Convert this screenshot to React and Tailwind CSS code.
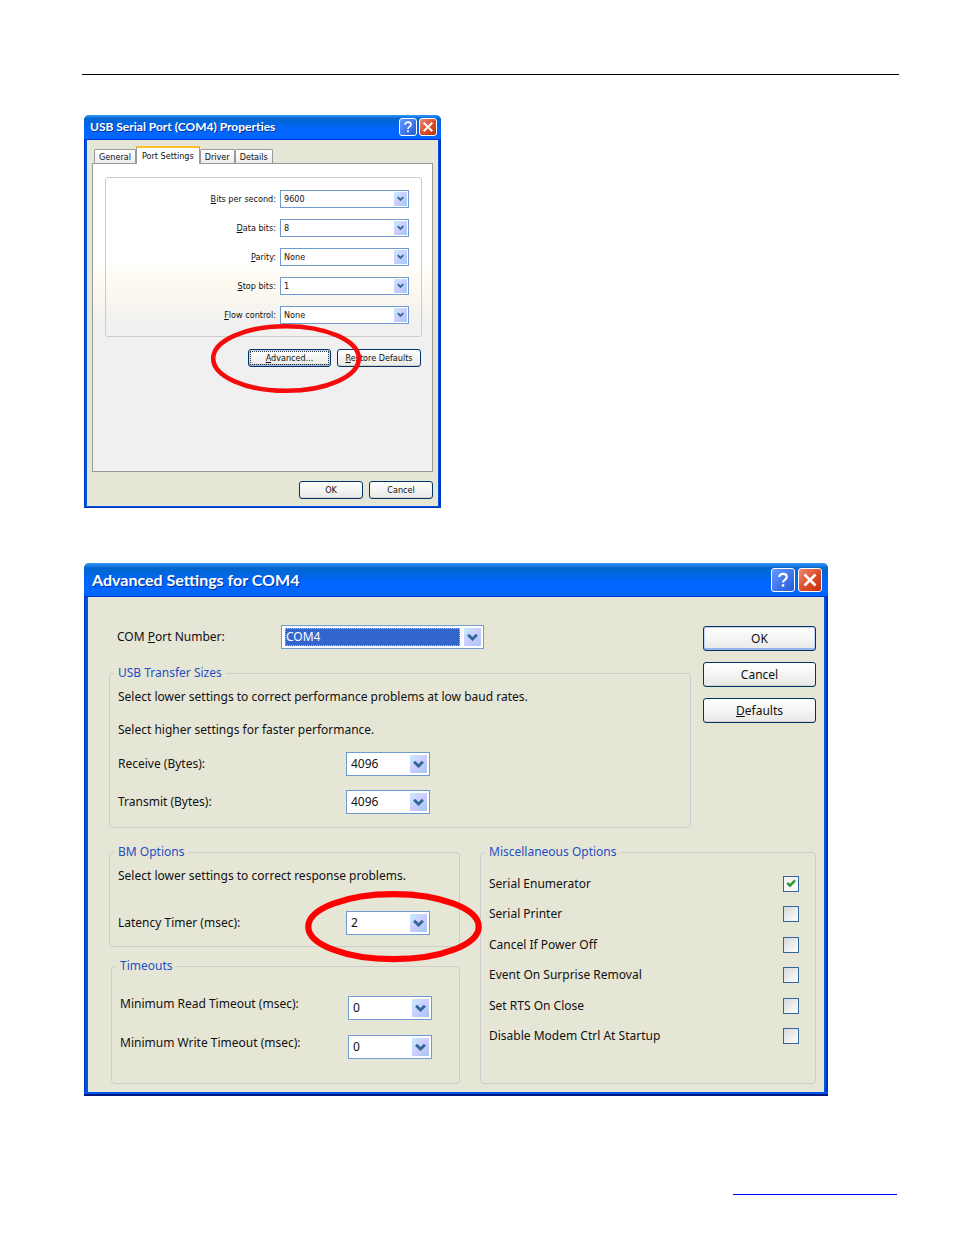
import React, { useId } from "react";

function Chevron({ small }) {
  return (
    <span
      className={
        "pointer-events-none absolute flex items-center justify-center bg-linear-to-br from-[#c4ecff] via-[#ccccff] to-[#a0c8f0] " +
        (small ? "inset-y-px right-px w-[13px]" : "inset-y-[2px] right-[2px] w-[17px]")
      }
    >
      <svg viewBox="0 0 10 8" className={small ? "w-[7px]" : "w-[11px]"} aria-hidden="true">
        <path d="M1 1.5 L5 5.5 L9 1.5" fill="none" stroke="#336699" strokeWidth="2.6" />
      </svg>
    </span>
  );
}

function Combo({ id, value, small, selected, className }) {
  const height = small ? "h-[18px]" : "h-6";
  return (
    <div className={"relative flex shrink-0 border border-[#6f9bd0] bg-white " + height + " " + className}>
      <select
        id={id}
        defaultValue={value}
        className={
          "min-w-0 flex-1 appearance-none outline-none " +
          (small ? "pl-[3px] " : "") +
          (selected
            ? "my-[2px] mr-[23px] ml-[3px] border border-dotted border-[#f0b060] bg-[#3366cc] text-white"
            : small ? "" : "pl-1")
        }
      >
        <option>{value}</option>
      </select>
      <Chevron small={small} />
    </div>
  );
}

function XpButton({ children, primary, focused, className }) {
  return (
    <button
      type="button"
      className={
        "flex items-center justify-center rounded-[3px] border border-[#003366] bg-linear-to-b from-white via-[#f4f4f2] to-[#e8e8e8] p-px " +
        (primary ? "shadow-[inset_0_-2px_0_#99b3e8,inset_0_0_0_1px_#c4d4f6] " : "shadow-[inset_0_-1px_0_#d6d2cc] ") +
        className
      }
    >
      <span className={"flex h-full w-full items-center justify-center " + (focused ? "border border-dotted border-[#333]" : "")}>
        <span>{children}</span>
      </span>
    </button>
  );
}

function TitleBar({ title, large }) {
  const box = large ? "size-6 rounded-[3px]" : "size-[18px] rounded-[3px]";
  const icon = large ? "size-[18px]" : "size-[14px]";
  return (
    <header
      className={
        "flex items-center justify-between rounded-t-[5px] border-b border-[#0033cc] bg-linear-to-b from-[#3399ff] via-[#0066cc] via-15% to-[#0066ff] to-60% text-white " +
        (large ? "h-[34px] pr-[6px] pl-2" : "h-[25px] pr-1 pl-[6px]")
      }
    >
      <h2
        className={
          "font-['Lato',sans-serif] font-bold [text-shadow:1px_1px_0_#003399] " +
          (large ? "text-[16px]" : "text-[12px]")
        }
      >
        {title}
      </h2>
      <div className={large ? "flex gap-[3px]" : "flex gap-[2px]"}>
        <button
          type="button"
          aria-label="Help"
          className={"flex items-center justify-center border border-white bg-linear-to-br from-[#6699ff] to-[#2358d8] " + box}
        >
          <svg viewBox="0 0 18 18" className={icon} aria-hidden="true">
            <path d="M5.2 6 C5.2 1.8 12.8 1.8 12.8 6 C12.8 8.6 9 8.6 9 11.6" fill="none" stroke="#fff" strokeWidth="2.2" />
            <rect x="7.8" y="13.2" width="2.4" height="2.4" fill="#fff" />
          </svg>
        </button>
        <button
          type="button"
          aria-label="Close"
          className={"flex items-center justify-center border border-white bg-linear-to-br from-[#e98a70] via-[#dd4f2c] to-[#c03000] " + box}
        >
          <svg viewBox="0 0 18 18" className={icon} aria-hidden="true">
            <path d="M3.5 3.5 L14.5 14.5 M14.5 3.5 L3.5 14.5" fill="none" stroke="#fff" strokeWidth="2.6" />
          </svg>
        </button>
      </div>
    </header>
  );
}

function Group({ legend, className, children }) {
  return (
    <fieldset className={"min-w-0 rounded-[4px] border border-[#cccccc] pl-2 " + className}>
      <legend className="-ml-1 px-1 text-[#1f4fc4]">{legend}</legend>
      {children}
    </fieldset>
  );
}

function Field({ label, value, align = "items-center", children }) {
  const id = useId();
  return (
    <div className={"flex " + align}>
      <label htmlFor={id} className="w-[228px] shrink-0">{label}</label>
      <div className="relative">
        <Combo id={id} value={value} className="w-[84px]" />
        {children}
      </div>
    </div>
  );
}

function PortField({ label, value }) {
  const id = useId();
  return (
    <div className="flex items-center justify-end gap-1">
      <label htmlFor={id}>{label}</label>
      <Combo id={id} value={value} small className="w-[129px]" />
    </div>
  );
}

function Tab({ label, active }) {
  return (
    <button
      type="button"
      role="tab"
      aria-selected={!!active}
      className={
        active
          ? "relative z-10 -mb-px h-[18px] border-x border-t-2 border-x-[#9a9a9a] border-t-[#ffc030] bg-white px-[5px]"
          : "h-[14px] rounded-t-[2px] border border-b-0 border-[#9a9a9a] bg-linear-to-b from-white to-[#ececec] px-1"
      }
    >
      {label}
    </button>
  );
}

function Option({ label, checked }) {
  return (
    <label className="flex items-center justify-between">
      {label}
      <span className="relative flex">
        <input
          type="checkbox"
          defaultChecked={checked}
          className="peer size-4 appearance-none border border-[#336699] bg-linear-to-br from-[#d8d8d8] to-white checked:from-[#f0f0f0]"
        />
        <svg viewBox="0 0 16 16" className="pointer-events-none absolute inset-0 hidden size-4 peer-checked:block" aria-hidden="true">
          <path d="M4.3 6.8 L7 9.6 L12 4.4" fill="none" stroke="#339933" strokeWidth="2.6" />
        </svg>
      </span>
    </label>
  );
}

function PropertiesDialog() {
  return (
    <section className="w-full max-w-[357px] rounded-t-[6px] border-b border-[#0033aa] bg-[#0055e6] pb-px font-['DejaVu_Sans_Condensed','DejaVu_Sans',sans-serif] text-[9px] leading-[12px]">
      <TitleBar title="USB Serial Port (COM4) Properties" />
      <div className="border-r-2 border-l border-[#0033bb] pr-px pl-[2px]">
        <div className="bg-[#e6e6d6] pt-[6px] pr-[5px] pb-[7px] pl-[5px]">
          <div role="tablist" className="flex items-end pl-[2px]">
            <Tab label="General" />
            <Tab label="Port Settings" active />
            <Tab label="Driver" />
            <Tab label="Details" />
          </div>
          <div className="border border-[#999999] bg-linear-to-b from-white from-32% via-[#fffaf0] via-39% to-[#f0f0f0] to-52% pt-[13px] pr-[10px] pb-[104px] pl-3">
            <div className="flex flex-col gap-[11px] rounded-[3px] border border-[#cccccc] py-3 pr-3">
              <PortField label={<><u>B</u>its per second:</>} value="9600" />
              <PortField label={<><u>D</u>ata bits:</>} value="8" />
              <PortField label={<><u>P</u>arity:</>} value="None" />
              <PortField label={<><u>S</u>top bits:</>} value="1" />
              <PortField label={<><u>F</u>low control:</>} value="None" />
            </div>
            <div className="mt-3 mr-px flex justify-end gap-[6px]">
              <div className="relative">
                <XpButton primary focused className="h-[18px] w-[83px]"><u>A</u>dvanced...</XpButton>
                <svg viewBox="0 0 152 72" className="pointer-events-none absolute -top-[27px] -left-[38px] h-[72px] w-[152px] max-w-none" aria-hidden="true">
                  <ellipse cx="76" cy="36.5" rx="72.8" ry="32.3" fill="none" stroke="#f40c0c" strokeWidth="4.6" />
                </svg>
              </div>
              <XpButton className="h-[18px] w-[84px]"><u>R</u>estore Defaults</XpButton>
            </div>
          </div>
          <div className="mt-[9px] flex justify-end gap-[6px]">
            <XpButton className="h-[18px] w-16">OK</XpButton>
            <XpButton className="h-[18px] w-16">Cancel</XpButton>
          </div>
        </div>
      </div>
    </section>
  );
}

function AdvancedDialog() {
  const port = useId();
  return (
    <section className="w-full max-w-[744px] rounded-t-[6px] border-b-2 border-[#001a80] bg-[#0055e6] pb-[2px] font-['Noto_Sans',sans-serif] text-[12px] leading-[16px]">
      <TitleBar title="Advanced Settings for COM4" large />
      <div className="border-r-2 border-l border-[#0033bb] pr-[2px] pl-[3px]">
        <div className="bg-[#e6e6d6] pt-7 pr-2 pb-2 pl-[21px]">
          <div className="flex gap-3">
            <div className="flex min-w-0 flex-1 flex-col gap-4">
              <div className="flex items-center pl-2">
                <label htmlFor={port} className="w-[164px] shrink-0">COM <u>P</u>ort Number:</label>
                <Combo id={port} value="COM4" selected className="w-[203px]" />
              </div>
              <Group legend="USB Transfer Sizes" className="pb-[13px]">
                <p className="mt-2">Select lower settings to correct performance problems at low baud rates.</p>
                <p className="mt-[17px] mb-[14px]">Select higher settings for faster performance.</p>
                <div className="flex flex-col gap-[14px]">
                  <Field label="Receive (Bytes):" value="4096" />
                  <Field label="Transmit (Bytes):" value="4096" />
                </div>
              </Group>
            </div>
            <div className="flex w-[113px] shrink-0 flex-col gap-[11px] pt-px">
              <XpButton primary className="h-[25px]">OK</XpButton>
              <XpButton className="h-[25px]">Cancel</XpButton>
              <XpButton className="h-[25px]"><u>D</u>efaults</XpButton>
            </div>
          </div>
          <div className="mt-4 flex gap-5">
            <div className="flex w-[351px] shrink-0 flex-col gap-[11px]">
              <Group legend="BM Options" className="pb-[11px]">
                <p className="mt-2 mb-[27px]">Select lower settings to correct response problems.</p>
                <Field label="Latency Timer (msec):" value="2">
                  <svg viewBox="0 0 180 74" className="pointer-events-none absolute -top-[21px] -left-[42px] h-[74px] w-[180px] max-w-none" aria-hidden="true">
                    <ellipse cx="89.5" cy="36.7" rx="85.2" ry="32.5" fill="none" stroke="#ff0000" strokeWidth="6.2" />
                  </svg>
                </Field>
              </Group>
              <Group legend="Timeouts" className="ml-[2px] pb-6">
                <div className="mt-[22px] flex flex-col gap-[15px]">
                  <Field label="Minimum Read Timeout (msec):" value="0" align="items-start" />
                  <Field label="Minimum Write Timeout (msec):" value="0" align="items-start" />
                </div>
              </Group>
            </div>
            <Group legend="Miscellaneous Options" className="flex-1 pr-4">
              <div className="mt-4 flex h-[168px] flex-col justify-between">
                <Option label="Serial Enumerator" checked />
                <Option label="Serial Printer" />
                <Option label="Cancel If Power Off" />
                <Option label="Event On Surprise Removal" />
                <Option label="Set RTS On Close" />
                <Option label="Disable Modem Ctrl At Startup" />
              </div>
            </Group>
          </div>
        </div>
      </div>
    </section>
  );
}

export default function App() {
  return (
    <div className="min-h-screen bg-white pt-[74px] pr-[55px] pb-10 pl-[82px] font-['Noto_Sans',sans-serif] text-[#111]">
      <hr className="border-black" />
      <main className="flex flex-col gap-[55px] pt-10 pl-[2px]">
        <PropertiesDialog />
        <AdvancedDialog />
      </main>
      <footer className="mt-[77px] flex justify-end pr-[2px]">
        <a href="#top" aria-label="Website" className="flex h-[22px] w-[164px] items-end">
          <span className="h-px w-full bg-[#0000ff]" />
        </a>
      </footer>
    </div>
  );
}
